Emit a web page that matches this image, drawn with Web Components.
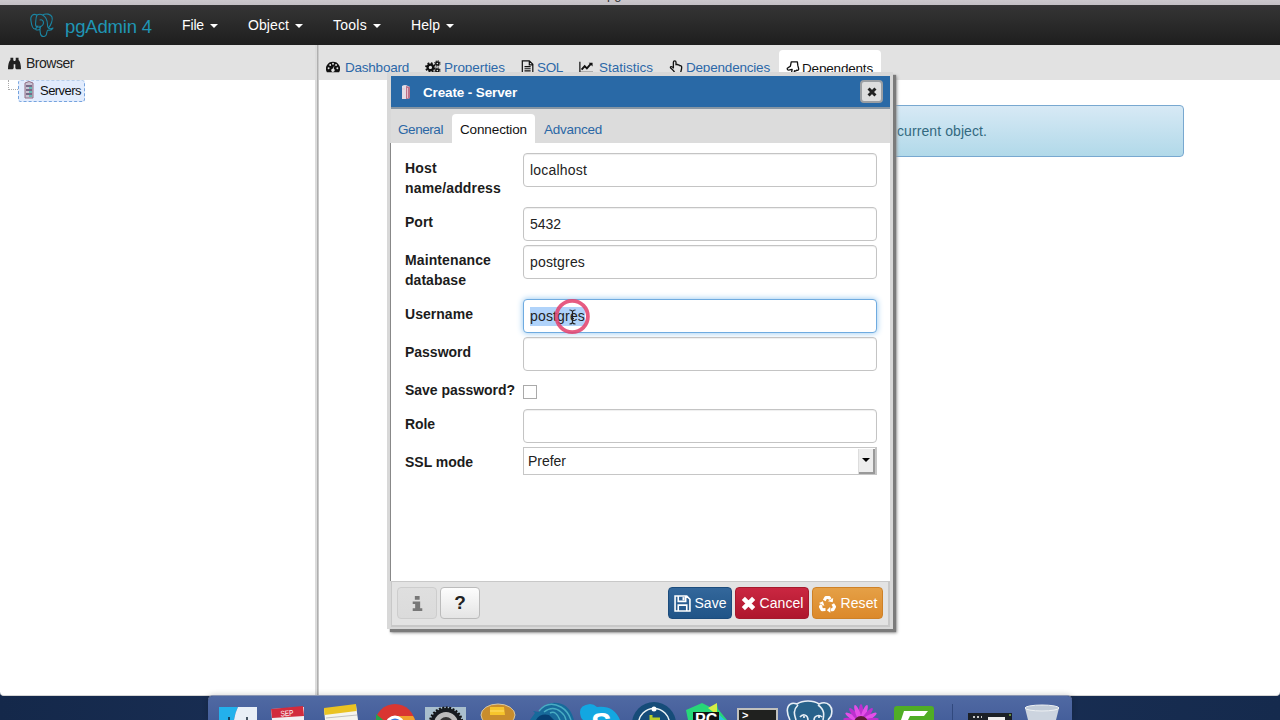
<!DOCTYPE html>
<html lang="en">
<head>
<meta charset="utf-8">
<title>pgAdmin 4</title>
<style>
html,body{margin:0;width:1280px;height:720px;overflow:hidden;font-family:"Liberation Sans",Arial,sans-serif;font-size:14px}
</style>
</head>
<body>
<pg-app></pg-app>
<script>
const define = (name, html, hook) => customElements.define(name, class extends HTMLElement {
  constructor() { super(); this.attachShadow({mode: 'open'}); }
  connectedCallback() {
    this.shadowRoot.innerHTML = typeof html === 'function' ? html(this) : html;
    if (hook) hook(this);
  }
});

define('pg-app', `<style>
:host{display:flex;flex-direction:column;position:relative;width:1280px;height:720px;overflow:hidden;background:linear-gradient(90deg,#14284a,#1d335c 40%,#152a4d)}
main{display:grid;grid-template-columns:315px 4px 1fr;height:651px;background:#fff;border-bottom:1px solid #d6d6d6;box-sizing:border-box;border-radius:0 0 4px 4px;flex:none;overflow:hidden}
.split{background:linear-gradient(90deg,#dcdcdc 0,#dcdcdc 50%,#a2a2a2 50%,#d8d8d8)}
.right{display:flex;flex-direction:column}
.info{margin:25px 96px 0 97px}
pg-dialog{position:absolute;left:387px;top:72px}
mac-dock{position:absolute;left:208px;top:696px}
</style>
<window-strip>pgAdmin 4</window-strip>
<pg-navbar></pg-navbar>
<main>
 <pg-browser></pg-browser><div class="split"></div>
 <div class="right"><pg-tabbar></pg-tabbar><div class="info"><pg-alert>current object.</pg-alert></div></div>
</main>
<mac-dock></mac-dock>
<pg-dialog></pg-dialog>`);

define('window-strip', `<style>
:host{display:flex;justify-content:center;align-items:flex-end;height:5px;background:linear-gradient(#cbc8cc,#c3c0c4);overflow:hidden;font-size:13px;line-height:16px;color:#333;flex:none}
div{margin-bottom:2px;margin-left:-4px}
</style><div><slot></slot></div>`);

define('pg-navbar', `<style>
:host{display:flex;height:40px;flex:none;background:linear-gradient(#353535,#1e1e1e);color:#fff;font-size:14px;align-items:center}
svg{margin-left:29px;width:26px;height:26px;flex:none}
.brand{margin-left:10px;width:117px;color:#1f95b4;font-size:18.5px;padding-top:3px}
</style>
<svg viewBox="0 0 26 26" fill="none" stroke="#1a86a4" stroke-width="1.1" stroke-linecap="round" stroke-linejoin="round">
<path d="M8 3C4 1 1 4 2 9c.5 4 2 8 4 8 1 0 1.500-1.500 3-3M8 3C6.500 6 7 9 6.500 12c0 2 1 3 2.500 3M8 3c2-1 4-1 5.500 0M13.500 3C17 1 22 2 23 5c1 3-1 8-3.500 11M13.500 3c4 2 5 6 5 10 0 1.500.5 2.500 1 3M19.500 16c1 .8 3 .8 4.500 0-1 2-3 2.500-5 2-1 0-1 1.500-1.500 4-.5 3-5 3.500-6 0-.7-3-.5-6-.5-8M9 15c2 0 3 .500 2 2-.7 1-2 1.300-4 .7M11 8c2-1 3.500 1 3.500 3 .1 2-1.500 3-3 4"/></svg>
<div class="brand"><fit-text w="87">pgAdmin 4</fit-text></div>
<nav-item w="66" t="22">File</nav-item><nav-item w="85" t="41">Object</nav-item><nav-item w="78" t="34">Tools</nav-item><nav-item w="60" t="29">Help</nav-item>`);

define('nav-item', e => `<style>
:host{display:flex;align-items:center;width:${e.getAttribute('w')}px}
i{border:4px solid transparent;border-top-color:#fff;border-bottom:0;margin-left:6px;margin-top:2px}
</style><fit-text w="${e.getAttribute('t')}">${e.textContent}</fit-text><i></i>`);

define('pg-browser', `<style>
:host{display:block}
header{display:flex;height:35px;background:#e2e2e2;align-items:center;padding:1px 0 0 8px;box-sizing:border-box;color:#222}
header fit-text{margin-left:5px}
.tree{display:flex;height:30px;overflow:hidden}
.line{width:9px;height:9px;margin-left:8px;border:1px dotted #aaa;border-width:0 0 1px 1px}
.node{display:flex;align-items:center;box-sizing:border-box;width:67px;height:22px;border:1px dashed #75a3de;border-top-color:#b6cdea;border-radius:3px;background:#e2ecfd;padding:0 0 2px 4px;font-size:13px;color:#111}
.node fit-text{margin-left:5px}
</style>
<header><ui-icon n="binoculars" s="13"></ui-icon><fit-text w="48">Browser</fit-text></header>
<div class="tree"><div class="line"></div><div class="node"><ui-icon n="server" s="12" h="18"></ui-icon><fit-text w="41">Servers</fit-text></div></div>`);

define('pg-tabbar', `<style>
:host{display:flex;height:35px;background:#e2e2e2;align-items:flex-start;padding:5px 0 0 7px;box-sizing:border-box;overflow:hidden;font-size:13.5px;flex:none}
</style>
<pg-tab icon="gauge" w="99" g="19" t="64">Dashboard</pg-tab>
<pg-tab icon="cogs" s="16" w="96" g="19" t="61">Properties</pg-tab>
<pg-tab icon="file" w="58" g="16" t="26">SQL</pg-tab>
<pg-tab icon="chart" w="90" g="20" t="54">Statistics</pg-tab>
<pg-tab icon="hand" w="110" g="17" t="84">Dependencies</pg-tab>
<pg-tab icon="turned" w="102" g="16" t="71" active>Dependents</pg-tab>`);

define('pg-tab', e => `<style>
:host{display:flex;box-sizing:border-box;width:${e.getAttribute('w')}px;height:38px;align-items:flex-start;padding-top:10px;color:#2c68a8}
:host([active]){background:#fff;border-radius:4px 4px 0 0;color:#111;padding-left:7px;padding-top:11px}
span{display:flex;width:${e.getAttribute('g')}px;color:#111}
fit-text{line-height:15px}
</style><span><ui-icon n="${e.getAttribute('icon')}" s="${e.getAttribute('s') || 14}" h="14"></ui-icon></span><fit-text w="${e.getAttribute('t')}">${e.textContent}</fit-text>`);

define('pg-alert', `<style>
:host{display:flex;align-items:center;height:52px;box-sizing:border-box;border:1px solid #78a8d0;border-radius:4px;background:linear-gradient(#d7e9f5,#b1d9e9);color:#33697f;padding-left:480px;font-size:14px}
</style><fit-text w="90">current object.</fit-text>`);

define('pg-dialog', `<style>
:host{display:grid;grid-template-columns:499px;grid-template-rows:33px 34px 438px 46px;box-sizing:border-box;width:506px;height:557px;border:4px solid #d8d8d8;border-bottom-width:2px;border-right-width:3px;background:#e0e0e0;box-shadow:3px 3px 1px #7b7b7b,4px 4px 3px #999}
header{display:flex;align-items:center;background:#2969a6;border-bottom:2px solid #8796a3;color:#fff;font-weight:bold;font-size:13.5px;padding-left:8px;box-sizing:border-box}
header fit-text{margin-left:10px;width:437px;margin-top:2px}
.x{box-sizing:border-box;width:23px;height:23px;border:2px solid #9b9fa3;border-radius:4px;background:#dedede;display:grid;place-items:center;color:#222}
.tabs{display:flex;background:#dcdcdc;align-items:flex-end;color:#2b67a5;font-size:13.5px}
.tabs div{height:29px;display:flex;align-items:center;box-sizing:border-box;padding-top:2px}
.tabs .a{background:#fff;color:#111;border-radius:4px 4px 0 0;padding-left:8px;width:83px;margin:0 9px 0 9px}
.body{background:#fff;box-shadow:-1px 0 #888;padding:10px 13px 0 14px;box-sizing:border-box}
footer{display:flex;align-items:center;border:2px solid #c8c8c8;border-width:1px 2px 2px 1px;background:#e3e3e3;padding:0 5px 0 5px;gap:3px;box-sizing:border-box;height:46px}
.sp{flex:1}
</style>
<header><ui-icon n="cyl" s="14" h="16"></ui-icon><fit-text w="94">Create - Server</fit-text><div class="x"><ui-icon n="times" s="10"></ui-icon></div></header>
<div class="tabs"><div style="padding-left:7px"><fit-text w="45">General</fit-text></div><div class="a"><fit-text w="67">Connection</fit-text></div><div><fit-text w="58">Advanced</fit-text></div></div>
<div class="body">
<form-row h="54" l="32,96" label="Host|name/address"><text-field v="localhost" w="57"></text-field></form-row>
<form-row h="38" l="28" label="Port"><text-field v="5432" w="31"></text-field></form-row>
<form-row h="54" l="86,61" label="Maintenance|database"><text-field v="postgres" w="55"></text-field></form-row>
<form-row h="38" l="68" label="Username"><text-field v="postgres" w="55" focused></text-field></form-row>
<form-row h="38" l="66" label="Password"><text-field v=""></text-field></form-row>
<form-row h="34" l="110" label="Save password?"><check-box></check-box></form-row>
<form-row h="38" l="30" label="Role"><text-field v=""></text-field></form-row>
<form-row h="38" l="68" label="SSL mode"><select-field></select-field></form-row>
</div>
<footer>
<pg-button kind="off" w="40"><ui-icon n="info" s="13" h="17"></ui-icon></pg-button>
<pg-button kind="plain" w="40"><b style="font-size:19px">?</b></pg-button>
<div class="sp"></div>
<pg-button kind="save" w="64"><ui-icon n="floppy" s="17"></ui-icon><fit-text w="32">Save</fit-text></pg-button>
<pg-button kind="cancel" w="74"><ui-icon n="times" s="15"></ui-icon><fit-text w="44">Cancel</fit-text></pg-button>
<pg-button kind="reset" w="71"><ui-icon n="recycle" s="19"></ui-icon><fit-text w="37">Reset</fit-text></pg-button>
</footer>`);

define('form-row', e => { const w = e.getAttribute('l').split(','); return `<style>
:host{display:grid;grid-template-columns:118px 354px;height:${e.getAttribute('h')}px;align-items:start}
.l{display:flex;flex-direction:column;padding-top:5px;font-weight:bold;font-size:14px;line-height:20px;color:#1c1c1c}
</style><div class="l">${e.getAttribute('label').split('|').map((t,i)=>`<fit-text w="${w[i]}">${t}</fit-text>`).join('')}</div><slot></slot>`; });

define('text-field', e => `<style>
:host{display:flex;position:relative;align-items:center;box-sizing:border-box;width:354px;height:34px;border:1px solid #c4c4c4;border-radius:4px;background:#fff;padding-left:6px;color:#222;box-shadow:inset 0 1px 1px #0001}
:host([focused]){border-color:#6fabe0;box-shadow:0 0 6px #8fc4ee}
:host([focused]) .v{background:#b0d3fa}
.v{height:19px;line-height:19px}
svg{position:absolute;left:30px;top:-2px;width:38px;height:38px}
</style>${e.getAttribute('v') ? `<fit-text class="v" w="${e.getAttribute('w')}">${e.getAttribute('v')}</fit-text>` : ''}
${e.hasAttribute('focused') ? `<svg viewBox="0 0 38 38" fill="none"><circle cx="18.200" cy="18.500" r="15.700" stroke="#e24470" stroke-opacity=".88" stroke-width="3.800"/><path d="M15.500 12q2.500 0 3 1.500.5-1.500 3-1.500M18.500 13v12M15.500 26q2.500 0 3-1.500.5 1.500 3 1.500M17 20.500h3" stroke="#222" stroke-width="1.200"/></svg>` : ''}`);

define('check-box', `<style>:host{display:block;box-sizing:border-box;width:14px;height:14px;border:1px solid #aaa;background:#fff;margin-top:10px}</style>`);

define('select-field', `<style>
:host{display:flex;align-items:center;justify-content:space-between;box-sizing:border-box;width:354px;height:28px;border:1px solid #c6c6c6;border-right-width:2px;padding:0 0 0 4px;color:#222;background:#fff}
.b{box-sizing:border-box;width:16px;height:25px;display:grid;place-items:center;border:2px solid #999;border-width:0 2px 2px 0;background:#ededed;box-shadow:-1px 0 #ddd}
i{border:4px solid transparent;border-top:4px solid #000;border-bottom:0}
</style><fit-text w="38">Prefer</fit-text><div class="b"><i></i></div>`);

define('pg-button', e => { const k = {
off:['#dfdfdf','#dbdbdb','#cdcdcd','#777'],plain:['#fdfdfd','#e4e4e4','#bbb','#222'],
save:['#33679b','#205487','#1c4c7c','#fff'],cancel:['#ca2741','#ae162d','#a51a2d','#fff'],reset:['#e5a046','#dc892a','#ce8127','#fff']}[e.getAttribute('kind')];
return `<style>:host{display:flex;align-items:center;justify-content:center;gap:4px;box-sizing:border-box;width:${e.getAttribute('w')}px;height:32px;border:1px solid ${k[2]};border-radius:4px;background:linear-gradient(${k[0]},${k[1]});color:${k[3]};font-size:14px;flex:none;margin-top:-1px}</style><slot></slot>`; });

const arm = '<path d="M6.600 6.800L8.300 3.600h3.400L12.900 5.600" fill="none" stroke="currentColor" stroke-width="3.200" stroke-linejoin="round"/><path d="M10.400 7.600L16 4.300 15.500 8.800z" fill="currentColor"/>';
const icons = {
binoculars:['0 0 16 16','<path fill="currentColor" d="M3 1h3.500v3H7v9c0 1-.4 2-1.500 2H0C0 10 1 6 2.500 4H3zM9.500 1H13v3h.5C15 6 16 10 16 15h-5.500C9.400 15 9 14 9 13V4h.5zM6.800 5h2.400v4H6.800z"/>'],
server:['0 0 12 18','<path d="M2 2q4-3 8 0v15H2z" fill="#c9c4d4" stroke="#936f85"/><path d="M3 5h6M3 9h6M3 13h6" stroke="#5c4d70" stroke-width="1.300"/><path d="M6 7h3M6 11h3M6 15h3" stroke="#4ab6ad" stroke-width="1.300"/>'],
cyl:['0 0 14 16','<path d="M3 2q3-2 6 0l2 1v11l-3 1H3z" fill="#e3dce5"/><path d="M7 2l4 1v11l-3 1H7z" fill="#bc7188"/><path d="M8.500 4v10M3 5h3" stroke="#e6c1cd"/>'],
gauge:['0 0 16 16','<path fill="currentColor" d="M8 2a8 8 0 0 0-7 12h14A8 8 0 0 0 8 2"/><g fill="#e2e2e2"><circle cx="3" cy="9.500" r="1.100"/><circle cx="4.800" cy="5.800" r="1.100"/><circle cx="8" cy="4.300" r="1.100"/><circle cx="11.500" cy="5.800" r="1.100"/><circle cx="13" cy="9.500" r="1.100"/><path d="M9.500 6L9 10a2 2 0 1 1-1-.3z"/></g>'],
cogs:['0 0 18 16','<g fill="none" stroke="currentColor"><circle cx="6" cy="8.500" r="3.200" stroke-width="2.600"/><circle cx="6" cy="8.500" r="5" stroke-width="2" stroke-dasharray="2 1.930"/><circle cx="14" cy="4" r="1.800" stroke-width="1.700"/><circle cx="14" cy="4" r="3" stroke-width="1.300" stroke-dasharray="1.300 1.050"/><circle cx="14" cy="12" r="1.800" stroke-width="1.700"/><circle cx="14" cy="12" r="3" stroke-width="1.300" stroke-dasharray="1.300 1.050"/></g>'],
file:['0 0 16 16','<path fill="none" stroke="currentColor" stroke-width="1.400" d="M1.500 1h8l4 4v10h-12zM9.500 1v4.500h4M4 7.500h7M4 10h7M4 12.500h7"/>'],
chart:['0 0 16 16','<path fill="none" stroke="currentColor" stroke-width="1.400" d="M1 2v12h15"/><path fill="none" stroke="currentColor" stroke-width="2.200" d="M3 11l3.500-4L9 9.500l4.500-5"/><path d="M11 3h4.500v4.500z" fill="currentColor"/>'],
hand:['0 0 16 16','<path fill="none" stroke="currentColor" stroke-width="1.500" stroke-linejoin="round" d="M5 9V2.500C5 .5 8 .5 8 2.500V5.500c1-.7 2-.5 2.300.4 1-.5 1.900-.2 2.200.7 1.300-.3 2 .4 2 1.700 0 3-1 4-1.200 6.700H6.500C6 12 3.500 11 1.800 9 1 7.500 3 6.500 5 9z"/>'],
turned:['0 0 16 16','<path fill="none" stroke="currentColor" stroke-width="1.500" stroke-linejoin="round" d="M6 1h7l.5 4 1 4c0 1.500-1.500 2-2.500 1.500-.3 1-1.500 1.200-2.200.5L9 14c-1 1.500-3 .5-2.600-1L7 9.500 3 10.500C1 10.500.8 8 2.500 7.500L5 6z"/>'],
times:['0 0 16 16','<path d="M2.500 2.500l11 11M13.500 2.500l-11 11" stroke="currentColor" stroke-width="4.800"/>'],
info:['0 0 12 16','<path fill="currentColor" d="M3.500 1h4.500v3.500H3.500zM1.500 6H8.500v6.500h2V15h-9v-2.500h2.300V8.500H1.500z"/>'],
floppy:['0 0 16 16','<path fill="none" stroke="currentColor" stroke-width="1.500" d="M1 1h11l3 3v11H1zM4 1v5h7V1M4 15V9.500h8V15"/><path d="M8 2h2v3H8z" fill="currentColor"/>'],
recycle:['0 0 20 20',`${arm}<g transform="rotate(120 10 11.200)">${arm}</g><g transform="rotate(240 10 11.200)">${arm}</g>`]
};
define('ui-icon', e => { const d = icons[e.getAttribute('n')], s = e.getAttribute('s');
return `<style>:host{display:block;flex:none}svg{display:block;width:${s}px;height:${e.getAttribute('h')||s}px}</style><svg viewBox="${d[0]}">${d[1]}</svg>`; });

const petals = Array.from({length: 18}, (_, i) => `<ellipse cx="861" cy="713" rx="2.300" ry="9" transform="rotate(${i*20} 861 722)" fill="${i%2?'#e44ee8':'#bd2fcf'}"/>`).join('');
define('mac-dock', `<style>
:host{display:block;width:864px;height:24px;background:linear-gradient(#5069a3,#455f9b);border-radius:5px 5px 0 0;overflow:hidden;box-shadow:0 -1px #8a95b2,0 -1px 6px #0003}
svg{display:block}
</style>
<svg width="864" height="24" viewBox="208 696 864 24" font-family="Liberation Sans">
<path d="M219 707h19q-3 6-4 13h-15z" fill="#23b1ec"/><path d="M238 707h19v13h-23q1-7 4-13z" fill="#e9eff7"/><path d="M229 717v3M247 717v3" stroke="#123" stroke-width="1.500"/>
<path d="M271 709l33-2v13h-32z" fill="#f3f0f2"/><path d="M271 709l32-3 1 10-32 2z" fill="#d22b3d"/><text x="280.500" y="716" font-size="8" fill="#fff" textLength="13" lengthAdjust="spacingAndGlyphs" transform="rotate(-4 287 713)">SEP</text>
<path d="M324 709l32-4 2 15h-33z" fill="#f5f4ee"/><path d="M324 708l32-4 .5 7-32 4z" fill="#eac322"/><path d="M326 718l31-3" stroke="#aaa" stroke-width=".7"/>
<circle cx="395" cy="724" r="20" fill="#d93631"/><path d="M376 714l12 10-12 3z" fill="#26a34b"/><path d="M398 716h15q3 4 2 8h-17z" fill="#f0a22e"/><circle cx="395" cy="725" r="9.500" fill="#fff"/><circle cx="395" cy="726" r="7.500" fill="#3477dc"/>
<path d="M425 707h41v13h-41z" fill="#a9bfce"/><circle cx="446" cy="724" r="14" fill="#bbb" stroke="#171b20" stroke-width="4"/><circle cx="446" cy="724" r="16.500" fill="none" stroke="#111" stroke-width="2" stroke-dasharray="2 1.500"/><circle cx="446" cy="724" r="7" fill="#333"/>
<ellipse cx="498" cy="715" rx="17" ry="11" fill="#c98d2d" stroke="#d6c8a6"/><path d="M490 707h14l1 8h-15z" fill="#f7c52c"/><path d="M490 711h14" stroke="#ffe06c"/>
<path d="M530 720l5-7-2-2 6 1q7-11 19-9 12 2 16 17z" fill="#176a9b"/><path d="M539 711q9-11 22-4 7 4 10 13M544 712q9-7 17 0 4 3 5 8M550 713q6-3 10 7" fill="none" stroke="#48acc3" stroke-width="1.500"/><path d="M536 720q4-7 13-5l5 5z" fill="#063f73"/>
<path d="M580 712q0-7 10-8 4 0 7 3 17-2 23 13h-37q-3-3-3-8z" fill="#13a7e1"/><text x="591" y="735" font-size="31" font-weight="bold" fill="#fff">S</text>
<circle cx="654" cy="724" r="22" fill="#164c79"/><circle cx="654" cy="724" r="15.500" fill="none" stroke="#edf4f6" stroke-width="1.500"/><circle cx="654" cy="709" r="2.500" fill="#fff"/><path d="M651 715v5M650 719h10" stroke="#b9cf28" stroke-width="3"/>
<path d="M686 710l16-7 8 4 7-3 1 5 9 11h-39z" fill="#27d778"/><path d="M708 708l9-5v12z" fill="#d5ed45"/><path d="M716 712l9 8h-8z" fill="#2bc7df"/><path d="M693 712h26v8h-26z" fill="#121212"/><text x="695" y="725" font-size="16" font-weight="bold" fill="#fff">PC</text>
<path d="M737 708h41v12h-41z" fill="#c0c0bd"/><path d="M739 710h37v10h-37z" fill="#20211f"/><text x="742" y="719" font-size="11" font-weight="bold" fill="#fff">&gt;_</text>
<path d="M790 720c-6-12-1-19 7-16 6-4 16-4 22 0 9-4 15 3 12 12l-3 4" fill="#28628b" stroke="#e7eef5" stroke-width="1.600"/><path d="M798 705c-6 6-3 11-2 15M818 705c7 5 6 10 5 15M800 717c3-4 8-2 8 3M814 720c0-4 5-6 8-3" fill="none" stroke="#e7eef5" stroke-width="1.600"/><circle cx="804" cy="717" r="1" fill="#fff"/><circle cx="819" cy="717" r="1" fill="#fff"/>
${petals}<circle cx="861" cy="723" r="7" fill="#5d1c37"/>
<rect x="894" y="706" width="40" height="20" rx="3" fill="#50ad25"/><path d="M904 711h24l-4 5h-14l-2 4h-7z" fill="#fff"/>
<path d="M952.500 704v16" stroke="#31497e"/>
<path d="M968 713h44v7h-44z" fill="#1b2027"/><path d="M988 717h17v3h-17z" fill="#eee"/><path d="M973 717h9" stroke="#fff" stroke-width="1.500" stroke-dasharray="2 2"/><circle cx="1010" cy="715" r="1" fill="#7eb044"/>
<path d="M1025 708h34l-3 12h-28z" fill="#ccd4df"/><ellipse cx="1042" cy="708" rx="17" ry="3" fill="#c1cbd8" stroke="#eef1f3"/>
</svg>`);

// Tracks a label to a given width by distributing the difference between its letters.
define('fit-text', `<style>:host{display:block;white-space:nowrap}span{display:inline-block}</style><span><slot></slot></span>`, e => {
  const s = e.shadowRoot.querySelector('span'), w = +e.getAttribute('w'), n = e.textContent.length;
  s.style.letterSpacing = (w - s.getBoundingClientRect().width) / n + 'px';
});
</script>
</body>
</html>
